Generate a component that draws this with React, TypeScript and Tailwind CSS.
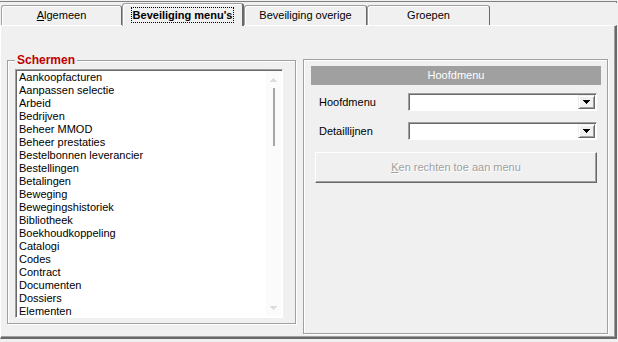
import React from 'react';
import clsx from 'clsx';

const SCHERMEN = [
  'Aankoopfacturen',
  'Aanpassen selectie',
  'Arbeid',
  'Bedrijven',
  'Beheer MMOD',
  'Beheer prestaties',
  'Bestelbonnen leverancier',
  'Bestellingen',
  'Betalingen',
  'Beweging',
  'Bewegingshistoriek',
  'Bibliotheek',
  'Boekhoudkoppeling',
  'Catalogi',
  'Codes',
  'Contract',
  'Documenten',
  'Dossiers',
  'Elementen',
];

const TABS = [
  { key: 'alg', width: 'w-[121px]', hot: 'A', rest: 'lgemeen' },
  { key: 'menu', width: 'w-[122px]', hot: '', rest: "Beveiliging menu's", active: true },
  { key: 'ov', width: 'w-[123px]', hot: '', rest: 'Beveiliging overige' },
  { key: 'gr', width: 'w-[123px]', hot: '', rest: 'Groepen' },
];

// small black / grey arrow drawn pixel by pixel
const Arrow: React.FC<{ up?: boolean; color: string; size?: number }> = ({ up, color, size = 3 }) => {
  const rows = Array.from({ length: size }, (_, i) => i);
  const w = size * 2 - 1;
  return (
    <svg width={w} height={size} viewBox={`0 0 ${w} ${size}`} shapeRendering="crispEdges">
      {rows.map(i => {
        const y = up ? size - 1 - i : i;
        return <rect key={i} x={i} y={y} width={w - i * 2} height={1} fill={color} />;
      })}
    </svg>
  );
};

const Combo: React.FC = () => (
  <div className="w-[189px] h-[18px] bg-white border border-[#a0a0a0] border-b-white border-r-white shadow-[inset_1px_1px_0_#696969] p-[1px] flex justify-end">
    <div className="w-[17px] h-full bg-[#f0f0f0] border border-[#f0f0f0] border-b-[#696969] border-r-[#696969] shadow-[inset_1px_1px_0_#fff,inset_-1px_-1px_0_#a0a0a0] flex items-center justify-center">
      <Arrow color="#000" size={4} />
    </div>
  </div>
);

export default function App() {
  return (
    <div className="w-[618px] h-[342px] bg-[#f0f0f0] overflow-hidden font-['Liberation_Sans',Arial,sans-serif] text-[11px] text-black leading-[13px]">
      <div className="mt-[1px] mr-[1px] h-[2px] border-t border-r border-[#808080]" />

      {/* tabs */}
      <div className="flex items-end h-[22px] pl-[1px]">
        {TABS.map(t => (
          <div
            key={t.key}
            className={clsx(
              t.width,
              'flex items-center justify-center border border-b-0 rounded-t-[3px] border-[#a0a0a0] border-r-[#696969] shadow-[inset_1px_1px_0_#fff]',
              t.active ? 'h-[23px] -mb-[1px] relative z-10 bg-[#f0f0f0] font-bold border-r-2' : 'h-[20px]'
            )}
          >
            {t.active ? (
              <span className="border border-dotted border-black px-[1px] leading-[14px]">{t.rest}</span>
            ) : (
              <span>
                {t.hot && <span className="underline">{t.hot}</span>}
                {t.rest}
              </span>
            )}
          </div>
        ))}
      </div>

      {/* tab page */}
      <div className="relative w-[617px] h-[314px] border-t border-l border-white border-r-2 border-b-2 border-r-[#696969] border-b-[#696969] shadow-[inset_-1px_-1px_0_#a0a0a0] flex items-start pl-[6px] pt-[33px]">
        {/* Schermen */}
        <div className="relative mt-[1px] w-[289px] h-[264px] border border-[#a0a0a0] shadow-[inset_1px_1px_0_#fff,1px_1px_0_#fff] pl-[7px] pt-[8px]">
          <span className="absolute -top-[8px] left-[7px] px-[2px] bg-[#f0f0f0] text-[#c00000] font-bold text-[12px] leading-[14px]">
            Schermen
          </span>
          <div className="w-[268px] h-[249px] bg-white border border-[#a0a0a0] border-b-white border-r-white shadow-[inset_1px_1px_0_#696969] p-[1px] flex overflow-hidden">
            <ul className="flex-1 overflow-hidden pl-[2px]">
              {SCHERMEN.map(s => (
                <li key={s} className="h-[13px] leading-[13px] whitespace-nowrap">
                  {s}
                </li>
              ))}
            </ul>
            <div className="w-[15px] h-full bg-[#fbfbfb] flex flex-col items-center">
              <div className="h-[17px] flex items-center">
                <Arrow up color="#dcdcdc" size={4} />
              </div>
              <div className="w-[2px] h-[58px] bg-[#a6a6a6]" />
              <div className="flex-1" />
              <div className="h-[17px] flex items-center">
                <Arrow color="#dcdcdc" size={4} />
              </div>
            </div>
          </div>
        </div>

        {/* Hoofdmenu */}
        <div className="ml-[7px] w-[305px] h-[275px] border border-[#a0a0a0] shadow-[inset_1px_1px_0_#fff,1px_1px_0_#fff] pl-[7px] pt-[6px]">
          <div className="w-[290px] h-[19px] bg-[#a0a0a0] text-white flex items-center justify-center">Hoofdmenu</div>
          <div className="mt-[8px] flex items-center h-[18px]">
            <span className="w-[97px] pl-[8px]">Hoofdmenu</span>
            <Combo />
          </div>
          <div className="mt-[11px] flex items-center h-[18px]">
            <span className="w-[97px] pl-[8px]">Detaillijnen</span>
            <Combo />
          </div>
          <div className="mt-[12px] ml-[4px] w-[282px] h-[31px] border border-white border-b-[#696969] border-r-[#696969] shadow-[inset_-1px_-1px_0_#a0a0a0] flex items-center justify-center text-[#a0a0a0] [text-shadow:1px_1px_0_#fff]">
            <span>
              <span className="underline">K</span>en rechten toe aan menu
            </span>
          </div>
        </div>
      </div>
    </div>
  );
}
